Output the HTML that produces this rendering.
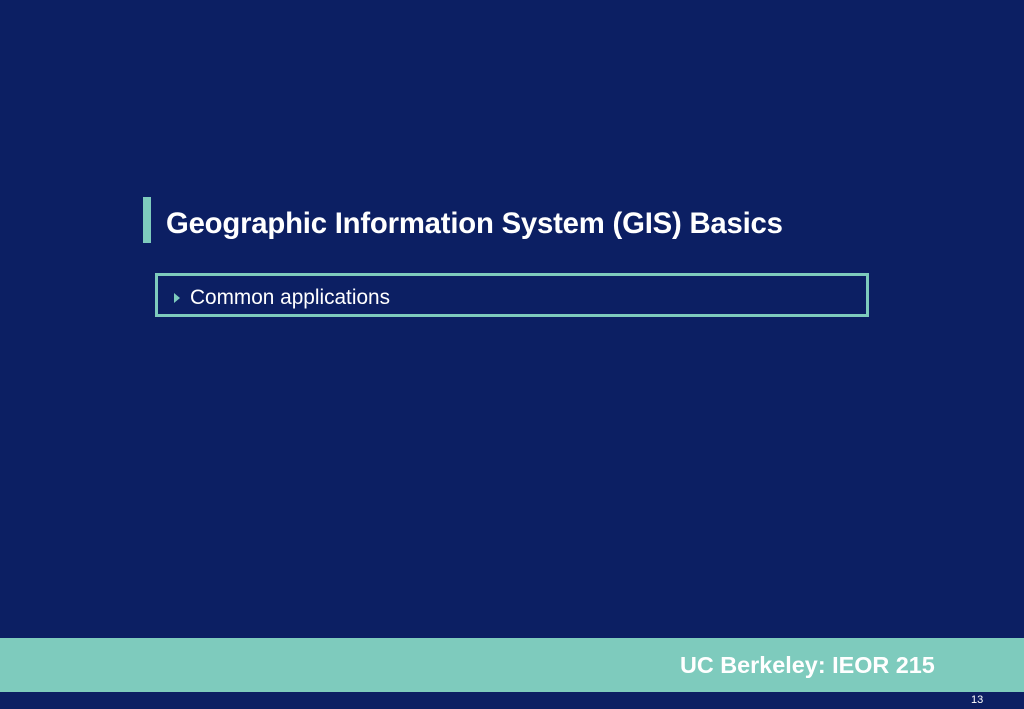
<!DOCTYPE html>
<html><head><style>
body{margin:0;width:1024px;height:709px;background:#0c1f63;position:relative;overflow:hidden;font-family:"Liberation Sans",Arial,sans-serif}
.bar{position:absolute;left:143px;top:197px;width:8px;height:46px;background:#7ecbbd}
.title{position:absolute;left:166px;top:207px;font-size:29.3px;font-weight:bold;color:#fff;letter-spacing:-0.2px}
.box{position:absolute;left:155px;top:273px;width:708px;height:38px;border:3px solid #7ecbbd}
.tri{position:absolute;left:174px;top:293px;width:0;height:0;border-left:6px solid #7ecbbd;border-top:5px solid transparent;border-bottom:5px solid transparent}
.item{position:absolute;left:190px;top:286px;font-size:20.8px;color:#fff}
.foot{position:absolute;left:0;top:638px;width:1024px;height:54px;background:#7ecbbd}
.ft{position:absolute;left:680px;top:652px;font-size:23.4px;font-weight:bold;color:#fff}
.pg{position:absolute;left:971px;top:694px;font-size:11px;color:#fff}
</style></head><body>
<div class="bar"></div>
<div class="title">Geographic Information System (GIS) Basics</div>
<div class="box"></div>
<div class="tri"></div>
<div class="item">Common applications</div>
<div class="foot"></div>
<div class="ft">UC Berkeley: IEOR 215</div>
<div class="pg">13</div>
</body></html>
